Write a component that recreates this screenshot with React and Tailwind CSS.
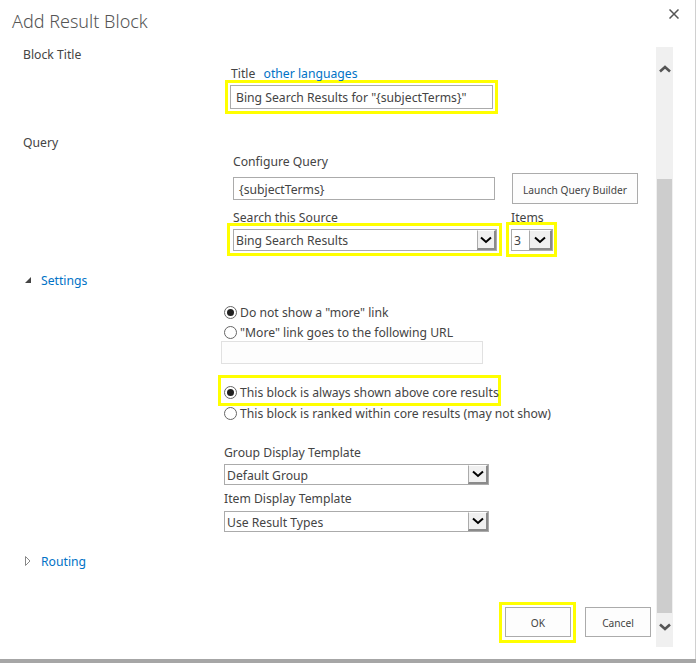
import React from "react";

const Chevron = ({ className, width = 2 }) => (
  <svg viewBox="0 0 12 8" className={className} fill="none" stroke="currentColor" strokeWidth={width}>
    <path d="M1 1.5 L6 6 L11 1.5" />
  </svg>
);

const Field = ({ value, className }) => (
  <div className={"flex items-center border border-[#ababab] bg-white pl-[5px] pt-[2px] text-[#444] whitespace-nowrap " + className}>
    {value}
  </div>
);

const Select = ({ value, className, arrowClass }) => (
  <div className={"flex items-stretch border border-[#ababab] bg-white text-[#444] " + className}>
    <span className="flex-1 flex items-center pl-[2px] pt-[2px] whitespace-nowrap overflow-hidden">{value}</span>
    <span className={"flex items-center justify-center bg-[#f0f0f0] border-l border-t border-l-[#ababab] border-t-white border-r-2 border-b-2 border-r-[#8a8a8a] border-b-[#8a8a8a] text-black " + arrowClass}>
      <Chevron className="w-[12px] h-[8px]" />
    </span>
  </div>
);

const Radio = ({ checked, label }) => (
  <label className="flex items-center whitespace-nowrap text-[#444] h-full">
    <span className="flex items-center justify-center w-[13px] h-[13px] rounded-full border border-[#666] bg-white mr-[3px] shrink-0">
      {checked && <span className="block w-[7px] h-[7px] rounded-full bg-[#222]" />}
    </span>
    <span className="pt-[1px]">{label}</span>
  </label>
);

const Button = ({ label, className }) => (
  <button className={"border border-[#ababab] bg-[#fdfdfd] pt-[2px] text-[#444] text-[10.2px] w-[66px] h-[30px] " + className}>
    {label}
  </button>
);

export default function App() {
  return (
    <div className="w-[696px] h-[663px] bg-white overflow-hidden text-[12.2px] leading-[18px] font-['Noto_Sans',sans-serif]">
      <div className="w-[695px] h-[659px] border-r border-[#d0d0d0] box-content">
        <div className="relative h-[46px] pl-[12px] pt-[7px] text-[18px] leading-[28px] font-light text-[#555]">
          Add Result Block
          <button className="absolute left-[669px] top-[9px] text-[#555]">
            <svg viewBox="0 0 10 10" className="w-[10px] h-[10px]" fill="none" stroke="currentColor" strokeWidth="1.5">
              <path d="M0.5 0.5 L9.5 9.5 M9.5 0.5 L0.5 9.5" />
            </svg>
          </button>
        </div>

        <div className="flex">
          <div className="w-[656px] shrink-0">
            <div className="pl-[23px] h-[16px] text-[#444]">Block Title</div>
            <div className="mt-[3px] ml-[231px] h-[15px] text-[#444]">
              Title <a className="ml-[5px] text-[#0072c6]">other languages</a>
            </div>
            <div className="ml-[225px] w-[273px] h-[34px] border-[3px] border-[#ffff00] p-[2px]">
              <Field value={'Bing Search Results for "{subjectTerms}"'} className="h-[24px]" />
            </div>

            <div className="mt-[20px] pl-[23px] h-[16px] text-[#444]">Query</div>
            <div className="mt-[3px] ml-[233px] h-[16px] text-[#444]">Configure Query</div>
            <div className="mt-[4px] ml-[233px] flex items-start">
              <Field value="{subjectTerms}" className="mt-[4px] w-[262px] h-[23px]" />
              <Button label="Launch Query Builder" className="ml-[17px] !w-[126px] !h-[31px]" />
            </div>
            <div className="mt-[5px] ml-[227px] flex items-start">
              <div className="w-[275px]">
                <div className="pl-[6px] h-[14px] text-[#444]">Search this Source</div>
                <div className="h-[33px] border-[3px] border-[#ffff00] pt-[3px] pl-[3px] pr-[2px]">
                  <Select value="Bing Search Results" className="h-[22px] w-[264px]" arrowClass="w-[19px]" />
                </div>
              </div>
              <div className="ml-[4px] w-[51px]">
                <div className="pl-[5px] h-[13px] text-[#444]">Items</div>
                <div className="h-[35px] border-[3px] border-[#ffff00] pt-[4px] pl-[2px]">
                  <Select value="3" className="h-[22px] w-[42px]" arrowClass="w-[23px]" />
                </div>
              </div>
            </div>

            <div className="mt-[16px] flex items-center h-[16px] pl-[25px]">
              <svg viewBox="0 0 6 6" className="w-[6px] h-[6px] -mt-[2px] text-[#444]" fill="currentColor">
                <path d="M6 0 L6 6 L0 6 Z" />
              </svg>
              <a className="ml-[10px] text-[#0072c6]">Settings</a>
            </div>

            <div className="mt-[15px] ml-[224px] h-[16px]">
              <Radio checked label={'Do not show a "more" link'} />
            </div>
            <div className="mt-[4px] ml-[224px] h-[16px]">
              <Radio label={'"More" link goes to the following URL'} />
            </div>
            <div className="mt-[1px] ml-[221px] w-[262px] h-[23px] border border-[#e1e1e1] bg-[#fdfdfd]" />

            <div className="mt-[11px] ml-[218px] w-[283px] h-[31px] border-[3px] border-[#ffff00] pl-[3px] pt-[3px]">
              <Radio checked label="This block is always shown above core results" />
            </div>
            <div className="ml-[224px] h-[14px]">
              <Radio label="This block is ranked within core results (may not show)" />
            </div>

            <div className="mt-[24px] ml-[224px] h-[16px] text-[#444]">Group Display Template</div>
            <div className="mt-[4px] ml-[224px]">
              <Select value="Default Group" className="h-[21px] w-[265px]" arrowClass="w-[20px]" />
            </div>
            <div className="mt-[5px] ml-[224px] h-[16px] text-[#444]">Item Display Template</div>
            <div className="mt-[5px] ml-[224px]">
              <Select value="Use Result Types" className="h-[21px] w-[265px]" arrowClass="w-[20px]" />
            </div>

            <div className="mt-[22px] flex items-center h-[16px] pl-[25px]">
              <svg viewBox="0 0 6 10" className="w-[6px] h-[10px] -mt-[2px] text-[#888]" fill="none" stroke="currentColor">
                <path d="M0.5 0.5 L5 5 L0.5 9.5 Z" />
              </svg>
              <a className="ml-[10px] text-[#0072c6]">Routing</a>
            </div>

            <div className="mt-[32px] ml-[499px] flex items-start">
              <div className="w-[77px] h-[41px] border-[3px] border-[#ffff00] pt-[2px] pl-[3px]">
                <Button label="OK" />
              </div>
              <Button label="Cancel" className="ml-[9px] mt-[5px]" />
            </div>
          </div>

          <div className="mt-[1px] w-[17px] h-[600px] bg-[#f0f0f0] flex flex-col items-center">
            <div className="h-[132px] pt-[18px] text-[#555]">
              <Chevron className="w-[12px] h-[8px] rotate-180" width={2.6} />
            </div>
            <div className="w-[15px] flex-1 bg-[#cdcdcd]" />
            <div className="h-[34px] pt-[10px] text-[#555]">
              <Chevron className="w-[12px] h-[8px]" width={2.6} />
            </div>
          </div>
        </div>
      </div>
      <div className="h-[4px] bg-[#a6a6a6]" />
    </div>
  );
}
